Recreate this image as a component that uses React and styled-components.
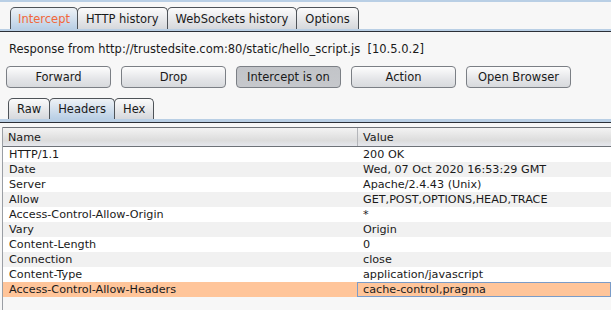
import React from 'react'
import styled, { createGlobalStyle } from 'styled-components'

const Global = createGlobalStyle`
  html, body {
    margin: 0;
    padding: 0;
    background: #f7f7f7;
  }
  body {
    font-family: "DejaVu Sans", "Liberation Sans", sans-serif;
    font-size: 11.5px;
    color: #1a1a1a;
  }
`

const Page = styled.div`
  width: 611px;
  height: 310px;
  overflow: hidden;
  display: flex;
  flex-direction: column;
  background: #f7f7f7;
`

const TopBand = styled.div`
  height: 2px;
  background: #b9cfe5;
`

const TabStrip = styled.div`
  display: flex;
  align-items: flex-end;
  padding: ${props => props.top}px 0 0 ${props => props.indent}px;
`

const Tab = styled.div`
  height: ${props => props.h}px;
  box-sizing: border-box;
  padding: 0 ${props => props.pad}px;
  display: flex;
  align-items: center;
  border: 1px solid #4e5358;
  border-bottom: none;
  border-radius: 5px 5px 0 0;
  margin-right: -1px;
  color: ${props => props.accent ? '#f2683a' : '#1a1a1a'};
  background: ${props => props.active
    ? 'linear-gradient(#eef2f6, #b9cfe5)'
    : 'linear-gradient(#fbfbfb, #d6d8dc)'};
  white-space: nowrap;
`

const TabRule = styled.div`
  height: ${props => props.band}px;
  background: #b9cfe5;
  border-bottom: 1px solid #2c3038;
`

const Info = styled.div`
  padding: 10px 0 0 9px;
  height: 24px;
  line-height: 14px;
`

const ButtonRow = styled.div`
  display: flex;
  gap: 10px;
  padding-left: 6px;
`

const Button = styled.div`
  width: 105px;
  height: 22px;
  box-sizing: border-box;
  border: 1px solid #7b7f85;
  border-radius: 4px;
  display: flex;
  align-items: center;
  justify-content: center;
  background: ${props => props.pressed
    ? 'linear-gradient(#c2c4c8, #c6c8cc)'
    : 'linear-gradient(#fdfdfd, #e4e5e8 60%, #d8dadd)'};
`

const SubTabs = styled.div`
  margin-top: 10px;
`

const Table = styled.div`
  margin: 4px 0 0 2px;
  flex: 1;
  border-left: 1px solid #9a9ea4;
  background: #f7f7f7;
  font-size: 11.2px;
`

const HeaderRow = styled.div`
  display: grid;
  grid-template-columns: 354px 1fr;
  height: 20px;
  box-sizing: border-box;
  border-top: 1px solid #6e7278;
  border-bottom: 1px solid #6e7278;
  background: linear-gradient(#f3f3f3, #dcdcdc 70%, #e6e8ee);
`

const HeadCell = styled.div`
  display: flex;
  align-items: center;
  padding-left: 5px;
  border-left: ${props => props.divider ? '1px solid #b4b6ba' : 'none'};
`

const Row = styled.div`
  display: grid;
  grid-template-columns: 354px 1fr;
  height: 15px;
  background: ${props => props.selected ? '#ffc59a' : props.odd ? '#f1f1f1' : '#ffffff'};
`

const Cell = styled.div`
  display: flex;
  align-items: center;
  box-sizing: border-box;
  padding-left: 5px;
  white-space: nowrap;
  overflow: hidden;
  border: 1px solid ${props => props.focus ? '#7b9cc8' : 'transparent'};
`

const headers = [
  ['HTTP/1.1', '200 OK'],
  ['Date', 'Wed, 07 Oct 2020 16:53:29 GMT'],
  ['Server', 'Apache/2.4.43 (Unix)'],
  ['Allow', 'GET,POST,OPTIONS,HEAD,TRACE'],
  ['Access-Control-Allow-Origin', '*'],
  ['Vary', 'Origin'],
  ['Content-Length', '0'],
  ['Connection', 'close'],
  ['Content-Type', 'application/javascript'],
  ['Access-Control-Allow-Headers', 'cache-control,pragma'],
]

const App = () => (
  <Page>
    <Global />
    <TopBand />
    <TabStrip top={5} indent={10}>
      <Tab h={22} pad={7} active accent>Intercept</Tab>
      <Tab h={22} pad={8}>HTTP history</Tab>
      <Tab h={22} pad={8}>WebSockets history</Tab>
      <Tab h={22} pad={8}>Options</Tab>
    </TabStrip>
    <TabRule band={2} />
    <Info>Response from http://trustedsite.com:80/static/hello_script.js&nbsp;&nbsp;[10.5.0.2]</Info>
    <ButtonRow>
      <Button>Forward</Button>
      <Button>Drop</Button>
      <Button pressed>Intercept is on</Button>
      <Button>Action</Button>
      <Button>Open Browser</Button>
    </ButtonRow>
    <SubTabs>
      <TabStrip top={0} indent={8}>
        <Tab h={21} pad={8}>Raw</Tab>
        <Tab h={21} pad={8} active>Headers</Tab>
        <Tab h={21} pad={8}>Hex</Tab>
      </TabStrip>
      <TabRule band={3} />
    </SubTabs>
    <Table>
      <HeaderRow>
        <HeadCell>Name</HeadCell>
        <HeadCell divider>Value</HeadCell>
      </HeaderRow>
      {headers.map(([name, value], i) => (
        <Row key={name} odd={i % 2 === 1} selected={i === headers.length - 1}>
          <Cell>{name}</Cell>
          <Cell focus={i === headers.length - 1}>{value}</Cell>
        </Row>
      ))}
    </Table>
  </Page>
)

export default App
